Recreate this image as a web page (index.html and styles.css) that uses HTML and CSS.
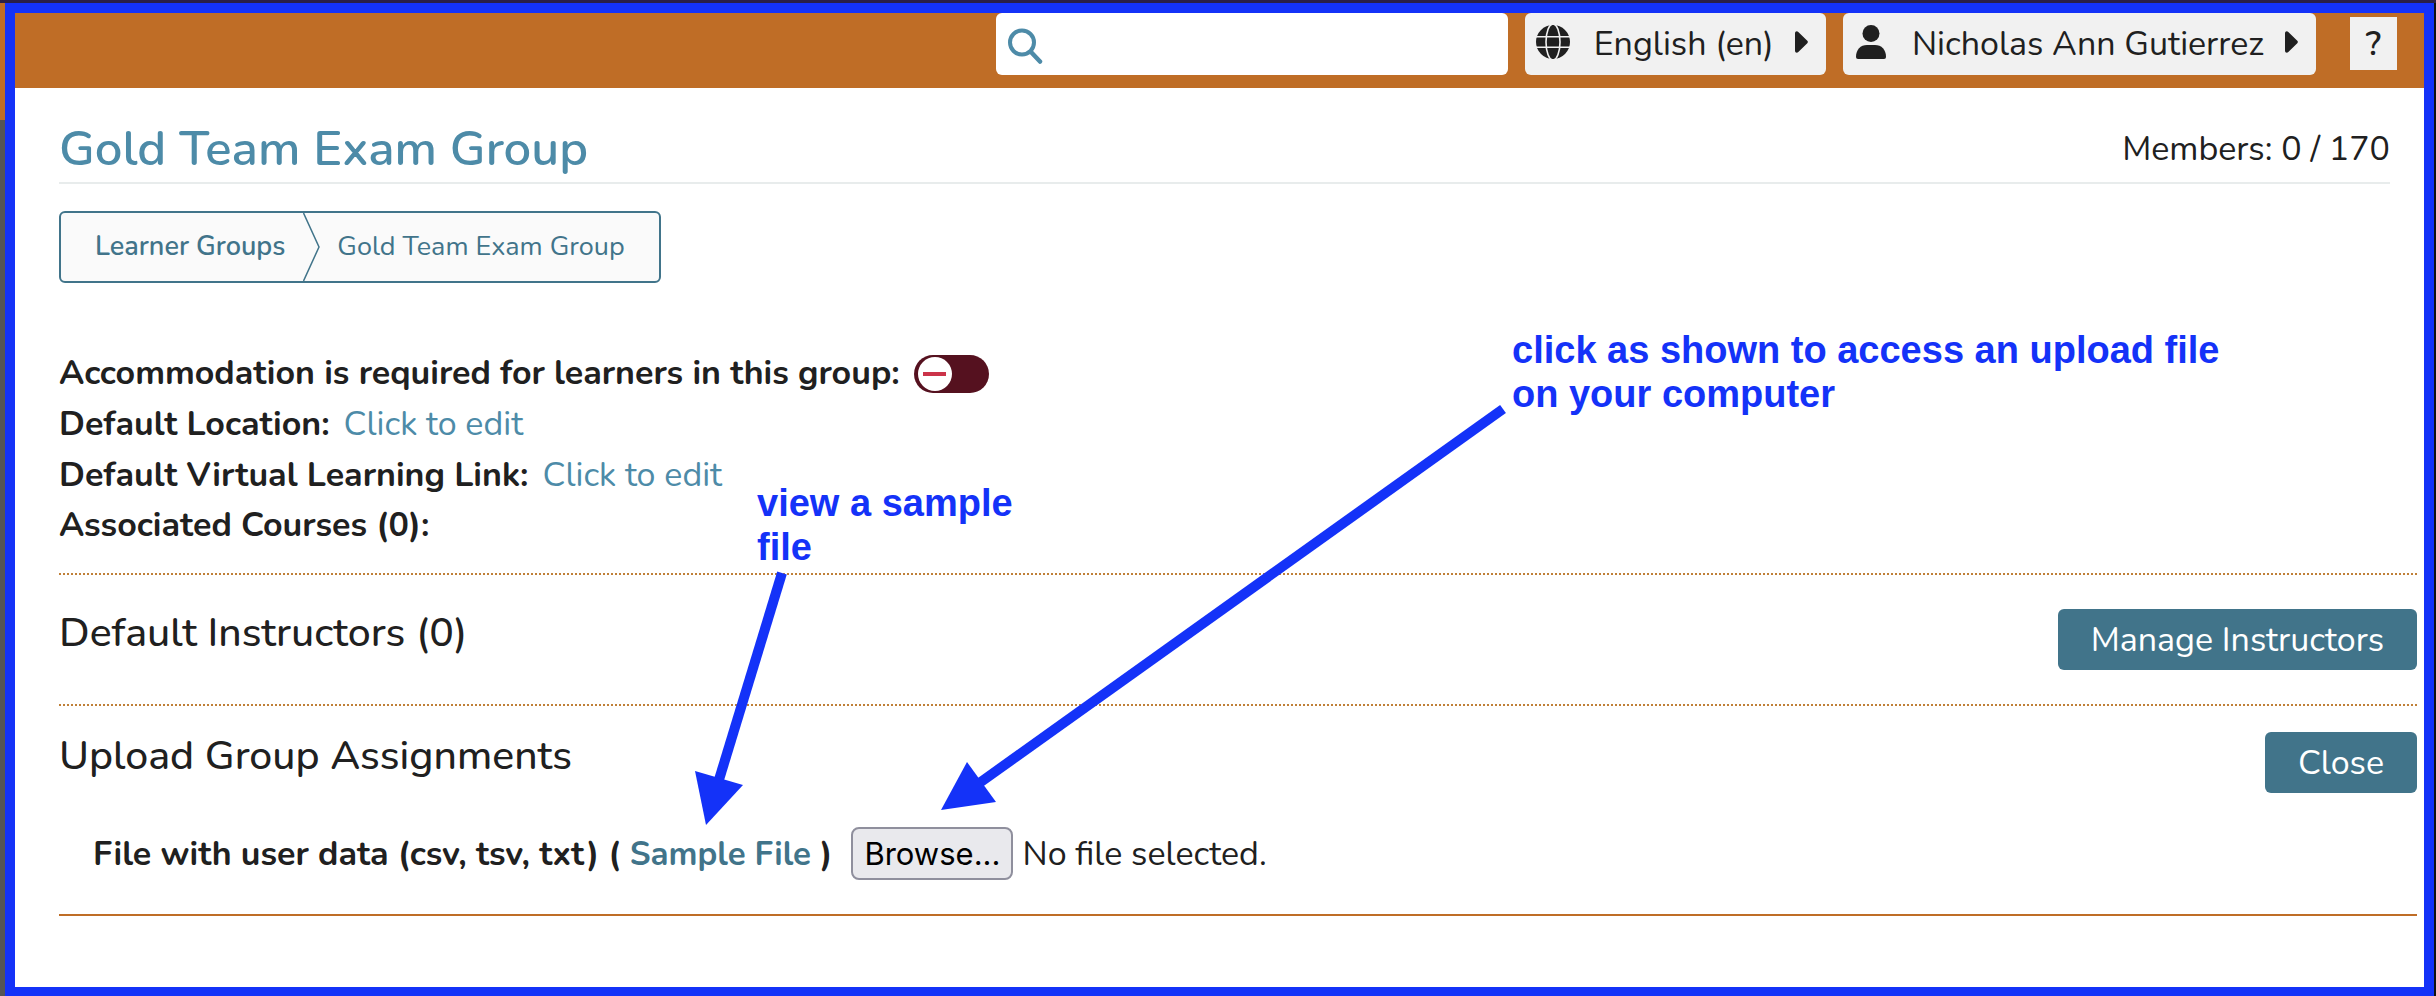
FILE: index.html
```html
<!DOCTYPE html>
<html lang="en">
<head>
<meta charset="utf-8">
<meta name="viewport" content="width=device-width, initial-scale=1">
<title>Gold Team Exam Group</title>
<link rel="stylesheet" href="styles.css">
</head>
<body>
<div class="frame">
  <header class="topbar">
    <label class="search">
      <svg class="search-icon" viewBox="0 0 36 36" aria-hidden="true"><circle cx="14" cy="14.500" r="12" fill="none" stroke="currentColor" stroke-width="4"/><path d="M23 24l9 9.500" stroke="currentColor" stroke-width="4.500" stroke-linecap="round"/></svg>
      <input class="search-input" type="search" aria-label="Search">
    </label>
    <button class="menu-button" type="button">
      <svg class="menu-icon" viewBox="0 0 34 34" aria-hidden="true">
        <circle cx="17" cy="17" r="17" fill="currentColor"/>
        <g fill="none" stroke="#f1f1f1" stroke-width="1.600"><ellipse cx="17" cy="17" rx="7" ry="18"/><path d="M0 11.800h34M0 22.200h34"/></g>
      </svg>
      <span class="menu-label">English (en)</span>
      <svg class="caret" viewBox="0 0 13 22" aria-hidden="true"><path d="M0 2.200C0 .2 2-.4 3.300.9L12.300 9.800Q13.400 11 12.300 12.200L3.300 21.100C2 22.400 0 21.800 0 19.800Z" fill="currentColor"/></svg>
    </button>
    <button class="menu-button" type="button">
      <svg class="menu-icon" viewBox="0 0 30 34" aria-hidden="true"><circle cx="15" cy="8.500" r="8.500" fill="currentColor"/><path d="M0 32C0 24.500 4.500 20 11 20h8c6.500 0 11 4.500 11 12q0 2-2 2H2q-2 0-2-2Z" fill="currentColor"/></svg>
      <span class="menu-label">Nicholas Ann Gutierrez</span>
      <svg class="caret" viewBox="0 0 13 22" aria-hidden="true"><path d="M0 2.200C0 .2 2-.4 3.300.9L12.300 9.800Q13.400 11 12.300 12.200L3.300 21.100C2 22.400 0 21.800 0 19.800Z" fill="currentColor"/></svg>
    </button>
    <button class="help-button" type="button">?</button>
  </header>

  <main class="content">
    <div class="title-row">
      <h1 class="title">Gold Team Exam Group</h1>
      <span class="members">Members: 0 / 170</span>
    </div>

    <nav class="breadcrumbs" aria-label="Breadcrumb">
      <a class="crumb crumb-parent" href="#">Learner Groups</a>
      <svg class="crumb-arrow" viewBox="0 0 17 68" aria-hidden="true"><path d="M.5 0L16 34L.5 68" fill="none" stroke="currentColor" stroke-width="1.500"/></svg>
      <span class="crumb">Gold Team Exam Group</span>
    </nav>

    <div class="details">
      <div class="detail">
        <label class="detail-label" for="accommodation">Accommodation is required for learners in this group:</label>
        <input class="toggle" id="accommodation" type="checkbox" role="switch">
      </div>
      <div class="detail"><span class="detail-label">Default Location:</span><button class="edit" type="button">Click to edit</button></div>
      <div class="detail"><span class="detail-label">Default Virtual Learning Link:</span><button class="edit" type="button">Click to edit</button></div>
      <div class="detail"><span class="detail-label">Associated Courses (0):</span></div>
    </div>

    <section class="section instructors">
      <h2 class="section-title">Default Instructors (0)</h2>
      <button class="action" type="button">Manage Instructors</button>
    </section>

    <section class="section upload">
      <h2 class="section-title">Upload Group Assignments</h2>
      <button class="action" type="button">Close</button>
      <div class="file-row">
        <span class="file-label">File with user data (csv, tsv, txt) ( <a class="sample-link" href="#">Sample File</a> )</span>
        <input class="file-input" id="userfile" type="file" accept=".csv,.tsv,.txt">
        <label class="browse" for="userfile">Browse...</label>
        <span class="file-status">No file selected.</span>
      </div>
    </section>
  </main>
</div>

<p class="note note-sample">view a sample<br>file</p>
<p class="note note-upload">click as shown to access an upload file<br>on your computer</p>
<svg class="arrows" aria-hidden="true">
  <g stroke="#1432f8" stroke-width="10"><path d="M782 573L718 783"/><path d="M1503 409L978 784"/></g>
  <g fill="#1432f8"><path d="M695 771L743 785L706 825Z"/><path d="M967 762L996 802L941 810Z"/></g>
</svg>
</body>
</html>
```
FILE: styles.css
```css
* { box-sizing: border-box; }

body {
  position: relative;
  margin: 0;
  min-height: 100vh;
  display: flex;
  padding: 3px 2px 0 5px;
  background:
    linear-gradient(#2a1f47, #2a1f47) top / 100% 3px no-repeat,
    linear-gradient(#bf6d26 120px, #555 120px) left / 5px 100% no-repeat,
    #111;
  color: #202020;
  font-family: Nunito, "Open Sans", "Noto Sans", sans-serif;
  font-size: 34px;
}

button, input { font: inherit; color: inherit; }
h1, h2, p { margin: 0; font-weight: 400; }
a { text-decoration: none; }

.frame {
  flex: 1;
  border: 10px solid #1432f8;
  border-bottom-width: 9px;
  background: #fff;
}

.topbar {
  display: flex;
  justify-content: flex-end;
  gap: 17px;
  padding: 0 27px 13px 0;
  background: #bf6d26;
}

.search {
  display: flex;
  align-items: center;
  width: 512px;
  height: 62px;
  padding: 4px 12px 0;
  border-radius: 6px;
  background: #fff;
  color: #4d8ba8;
}
.search-icon { width: 36px; height: 36px; flex: none; }
.search-input {
  flex: 1;
  min-width: 0;
  border: 0;
  outline: 0;
  background: none;
}

.menu-button {
  display: flex;
  align-items: center;
  height: 62px;
  padding: 0 18px 4px 11px;
  border: 0;
  border-radius: 6px;
  background: #f1f1f1;
}
.menu-label { margin: 4px 21px 0 24px; }
.menu-icon { width: 34px; height: 34px; }
.caret { width: 13px; height: 22px; }

.help-button {
  width: 47px;
  height: 53px;
  margin: 4px 0 0 17px;
  padding: 0;
  border: 0;
  background: #f1f1f1;
  font-weight: 600;
}

.content { padding: 24px 7px 0 44px; }

.title-row {
  display: flex;
  align-items: center;
  justify-content: space-between;
  margin-right: 27px;
  padding-top: 4px;
  border-bottom: 2px solid #e8ecec;
  line-height: 66px;
}
.title { color: #4d8ba8; font-size: 49px; font-weight: 600; }

.breadcrumbs {
  display: flex;
  width: fit-content;
  margin-top: 27px;
  padding: 0 34px;
  border: 2px solid #41748a;
  border-radius: 6px;
  background: #fafafa;
  color: #41748a;
  font-size: 27px;
  line-height: 68px;
}
.crumb { color: inherit; }
.crumb-parent { font-weight: 600; }
.crumb-arrow { width: 17px; height: 68px; margin: 0 17px 0 18px; }

.details { margin: 65px 0 24px; }
.detail {
  display: flex;
  align-items: center;
  gap: 14px;
  line-height: 51px;
}
.detail:last-child { line-height: 48px; }
.detail-label, .file-label { font-weight: 700; }
.edit {
  padding: 0;
  border: 0;
  background: none;
  color: #4d8ba8;
  line-height: inherit;
}

.toggle {
  appearance: none;
  display: flex;
  align-items: center;
  width: 75px;
  height: 38px;
  margin: 0;
  padding: 0 4px;
  border-radius: 19px;
  background: #55111f;
}
.toggle::before {
  content: "";
  width: 34px;
  height: 34px;
  border-radius: 50%;
  background: linear-gradient(#cb3349, #cb3349) center / 23px 4px no-repeat, #fff;
}
.toggle:checked { justify-content: flex-end; }

.section {
  display: flex;
  flex-wrap: wrap;
  justify-content: space-between;
  align-items: flex-start;
  border-top: 2px dotted #c08038;
}
.instructors { padding: 34px 0; }
.upload { padding: 26px 0 34px; border-bottom: 2px solid #bf6d26; }
.section-title { font-size: 41px; font-weight: 500; line-height: 48px; }
.action {
  height: 61px;
  padding: 0 33px;
  border: 0;
  border-radius: 6px;
  background: #41748a;
  color: #fff;
}

.file-row {
  position: relative;
  display: flex;
  align-items: center;
  flex-basis: 100%;
  margin-top: 34px;
  padding-left: 34px;
}
.sample-link { color: #41748a; font-size: 33px; }
.file-input { position: absolute; width: 1px; height: 1px; opacity: 0; }
.browse {
  margin: 0 9px 0 19px;
  padding: 0 11px;
  border: 2px solid #8f8f9d;
  border-radius: 8px;
  background: #e9e9ed;
  color: #000;
  font-family: Inter, sans-serif;
  font-size: 31px;
  line-height: 49px;
}

/* Annotations laid over the page */
.note {
  position: absolute;
  color: #1432f8;
  font-family: "Liberation Sans", Arial, sans-serif;
  font-size: 38px;
  font-weight: 700;
  line-height: 44px;
  white-space: nowrap;
}
.note-sample { left: 757px; top: 481px; }
.note-upload { left: 1512px; top: 328px; }
.arrows {
  position: absolute;
  top: 0;
  left: 0;
  width: 100%;
  height: 100%;
  pointer-events: none;
}
```
